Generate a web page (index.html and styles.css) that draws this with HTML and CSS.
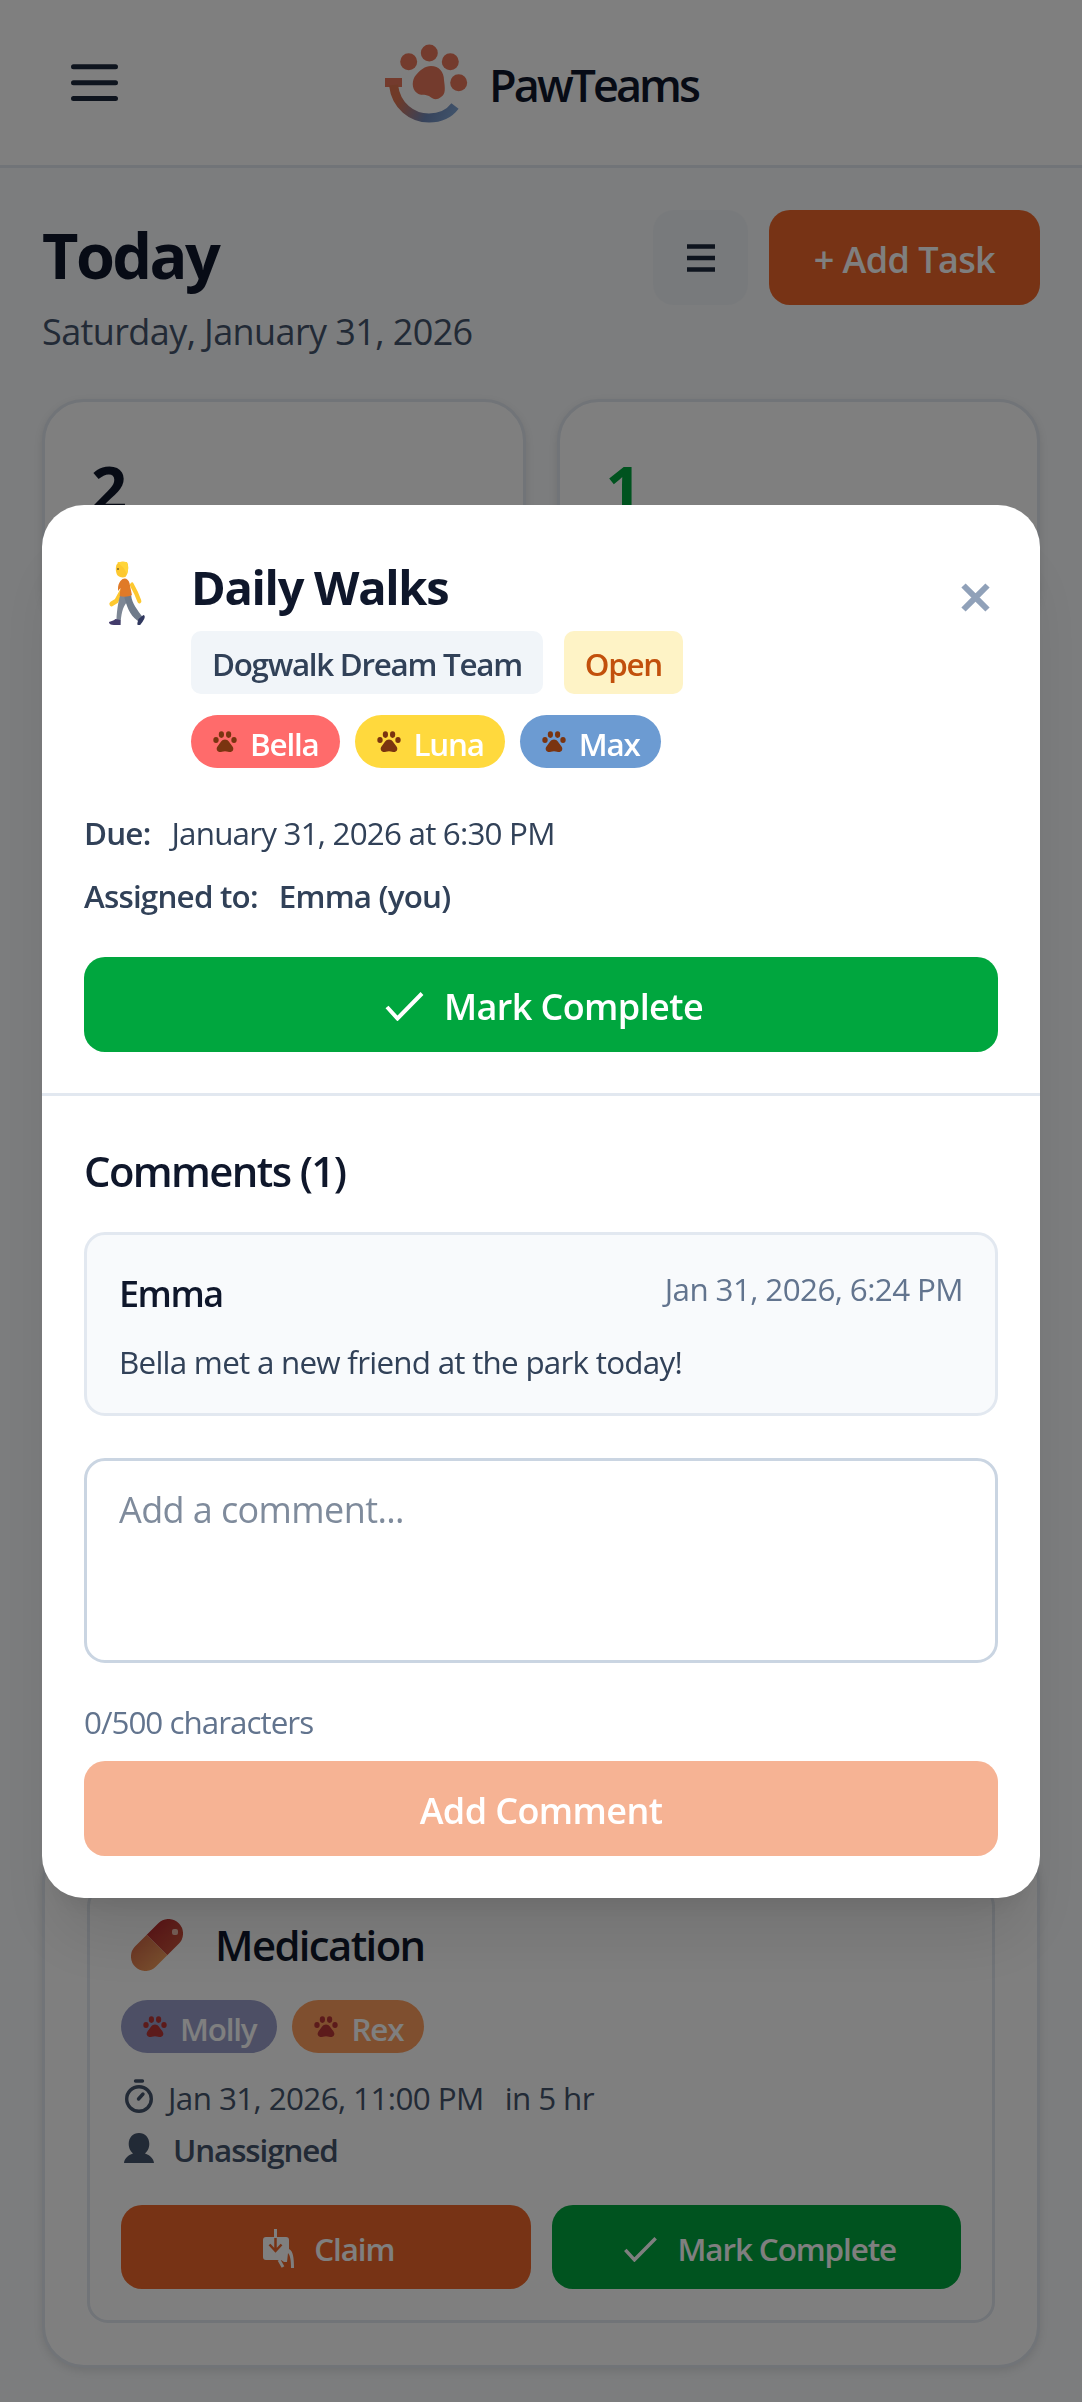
FILE: index.html
```html
<!DOCTYPE html>
<html lang="en">
<head>
    <meta charset="UTF-8">
    <meta name="viewport" content="width=device-width, initial-scale=1.0">
    <title>PawTeams</title>
    <link rel="stylesheet" href="styles.css">
</head>
<body>
    <!-- shared icons -->
    <svg class="sprite" width="0" height="0">
        <symbol id="paw" viewBox="0 0 24 22">
            <ellipse cx="8.4" cy="3.6" rx="2.6" ry="3.3"/>
            <ellipse cx="15.6" cy="3.6" rx="2.6" ry="3.3"/>
            <ellipse cx="3" cy="9" rx="2.7" ry="3"/>
            <ellipse cx="21" cy="9" rx="2.7" ry="3"/>
            <path d="M12 8.5c3.3 0 4.3 3 6.2 5.2 1.8 2 2.6 3.6 1.9 5.4-.9 2.2-3.4 2.3-5 1.7-2-.7-4.2-.7-6.2 0-1.6.6-4.1.5-5-1.7-.7-1.8.1-3.4 1.9-5.4C7.7 11.5 8.7 8.500 12 8.500z"/>
        </symbol>
        <symbol id="check" viewBox="0 0 39 30">
            <path d="M2 16l10.500 11.500L37 2.500" fill="none" stroke="currentColor" stroke-width="4"/>
        </symbol>
    </svg>

    <header class="navbar">
        <svg class="menu-icon" width="47" height="38" viewBox="0 0 47 38">
            <path d="M2.500 2.800h42M2.500 18.800h42M2.500 34.600h42" stroke="#1d293d" stroke-width="5" stroke-linecap="round"/>
        </svg>
        <div class="brand">
            <svg width="84" height="80" viewBox="0 0 84 80">
                <defs>
                    <linearGradient id="smile" x1="10" y1="40" x2="70" y2="70" gradientUnits="userSpaceOnUse">
                        <stop offset="0.15" stop-color="#e0744e"/>
                        <stop offset="0.65" stop-color="#6d87b8"/>
                        <stop offset="1" stop-color="#7fa3d3"/>
                    </linearGradient>
                </defs>
                <g fill="#e8775a">
                    <circle cx="24.7" cy="18.7" r="8.5"/>
                    <circle cx="45.3" cy="10" r="8.5"/>
                    <circle cx="66.3" cy="18.7" r="8.5"/>
                    <circle cx="74.7" cy="39.7" r="8.5"/>
                    <path d="M47 23c8 0 13 6 13 14 1 8 2 14-3 17-5 4-8 2-12-1-5-2-8 0-12-3-6-4-5-14-1-18 4-5 9-9 15-9z"/>
                    <path d="M1 35h17v9H1z"/>
                </g>
                <path d="M9.500 42C12 63 28 75 45 75c10 0 20-4 26-12" fill="none" stroke="url(#smile)" stroke-width="9"/>
            </svg>
            <span class="brand-name">PawTeams</span>
        </div>
    </header>

    <main class="page">
        <div class="page-top">
            <div>
                <h1>Today</h1>
                <p class="date">Saturday, January 31, 2026</p>
            </div>
            <div class="actions">
                <button class="btn-view">
                    <svg width="28" height="28" viewBox="0 0 28 28">
                        <path d="M0 2.500h28M0 14h28M0 25.500h28" stroke="#1d293d" stroke-width="4.500"/>
                    </svg>
                </button>
                <button class="btn btn-add">+ Add Task</button>
            </div>
        </div>

        <div class="stats">
            <div class="stat">2</div>
            <div class="stat stat-done">1</div>
        </div>

        <div class="tasks">
            <div class="task">
                <div class="task-title">
                    <svg width="52" height="52" viewBox="0 0 52 52">
                        <defs>
                            <linearGradient id="pillTop" x1="0" y1="0" x2="1" y2="0">
                                <stop offset="0" stop-color="#b93030"/>
                                <stop offset="1" stop-color="#c9503a"/>
                            </linearGradient>
                            <linearGradient id="pillBottom" x1="0" y1="0" x2="1" y2="0">
                                <stop offset="0" stop-color="#d9704a"/>
                                <stop offset="1" stop-color="#f09a5a"/>
                            </linearGradient>
                        </defs>
                        <g transform="rotate(45 26 26)">
                            <path d="M11.500 26V9.700a14.500 14.500 0 0 1 29 0V26z" fill="url(#pillTop)"/>
                            <path d="M11.500 26v16.300a14.500 14.500 0 0 0 29 0V26z" fill="url(#pillBottom)"/>
                        </g>
                        <rect x="41" y="10" width="6" height="6" rx="2" fill="#f0c0b0"/>
                    </svg>
                    <h3>Medication</h3>
                </div>
                <div class="pets pets-urgent">
                    <span class="pet molly"><svg><use href="#paw"/></svg>Molly</span>
                    <span class="pet rex"><svg><use href="#paw"/></svg>Rex</span>
                </div>
                <div class="meta">
                    <svg width="36" height="36" viewBox="0 0 36 36" fill="none" stroke="#45556c">
                        <circle cx="18" cy="20" r="12.300" stroke-width="3.400"/>
                        <path d="M14.500 2h7M17.500 20l4.500-5" stroke-width="3.400" stroke-linecap="round"/>
                    </svg>
                    <span class="meta-date">Jan 31, 2026, 11:00 PM</span>
                    <span class="meta-in">in 5 hr</span>
                </div>
                <div class="meta">
                    <svg width="36" height="36" viewBox="0 0 36 36" fill="#45556c">
                        <path d="M18 2c6 0 10.300 4.500 10.300 11 0 5-2.500 7.500-4.300 9.500 5 1.500 8.500 5 9 9.500H3c.5-4.500 4-8 9-9.500-1.800-2-4.300-4.500-4.300-9.500C7.700 6.500 12 2 18 2z"/>
                    </svg>
                    <span class="meta-user">Unassigned</span>
                </div>
                <div class="task-buttons">
                    <button class="btn btn-claim">
                        <svg width="31" height="40" viewBox="0 0 31 40">
                            <path d="M3 8h20a3 3 0 0 1 3 3v9c4 2 5 8 5 19h-3c0-8-1-13-3-15l-1 9h-3l-3-2H3a3 3 0 0 1-3-3V11a3 3 0 0 1 3-3z" fill="currentColor"/>
                            <path d="M16 31l4 7" stroke="currentColor" stroke-width="3"/>
                            <path d="M12.500 9v12M6.500 15.500l6 6.500 6-6.500" fill="none" stroke="#ee672a" stroke-width="2.500"/>
                            <path d="M12.500 0v9" stroke="currentColor" stroke-width="3"/>
                        </svg>
                        Claim
                    </button>
                    <button class="btn btn-complete">
                        <svg width="35" height="26"><use href="#check"/></svg>
                        Mark Complete
                    </button>
                </div>
            </div>
        </div>
    </main>

    <div class="overlay">
        <div class="modal">
            <div class="modal-top">
                <div class="modal-header">
                    <svg class="walker" width="86" height="66" viewBox="0 0 86 66">
                        <g transform="translate(9.400 0) scale(.82 1)">
                            <path d="M34 31l-6 9-6 3" fill="none" stroke="#fdc82f" stroke-width="5" stroke-linecap="round" stroke-linejoin="round"/>
                            <path d="M34 31h10l-3 10c-6 6-7 12-8 23h-5c0-12 2-24 6-33z" fill="#7d8795"/>
                            <path d="M38 35l8-1c1 9 8 15 14 22l-4 5c-9-5-14-11-18-24z" fill="#6f7b8a"/>
                            <path d="M27 58l6 1v5H25c-4 0-6-1-6-3 2-1 5-1 8-3z" fill="#433b6b"/>
                            <path d="M55 58l6-4c4 1 0 6-4 10h-3c-1-1 0-3 1-6z" fill="#30385f"/>
                            <path d="M33 20c4-4 9-3 11 2l3 12c-4 2-11 2-15 1l1-8-3 3c0-5 0-6 3-10z" fill="#e07a28"/>
                            <path d="M47 24l5 8 4 8" fill="none" stroke="#fdc82f" stroke-width="5" stroke-linecap="round"/>
                            <path d="M28 4c2-4 12-5 14-1 1 5 0 10-3 13-4 1-8 0-10-2-2-3-2-7-1-10z" fill="#fdc82f"/>
                            <path d="M29 1l12 0c2 4 2 8 0 12l-4-6z" fill="#ffd53a"/>
                            <circle cx="30" cy="8" r="1" fill="#5c4a2a"/>
                        </g>
                    </svg>
                    <div class="modal-info">
                        <h2>Daily Walks</h2>
                        <div class="tags">
                            <span class="tag tag-team">Dogwalk Dream Team</span>
                            <span class="tag tag-open">Open</span>
                        </div>
                        <div class="pets">
                            <span class="pet bella"><svg><use href="#paw"/></svg>Bella</span>
                            <span class="pet luna"><svg><use href="#paw"/></svg>Luna</span>
                            <span class="pet max"><svg><use href="#paw"/></svg>Max</span>
                        </div>
                    </div>
                    <button class="btn-close">
                        <svg width="29" height="29" viewBox="0 0 29 29">
                            <path d="M2.500 2.500l24 24M26.500 2.500l-24 24" stroke="#90a1b9" stroke-width="6"/>
                        </svg>
                    </button>
                </div>
                <div class="details">
                    <div class="detail"><strong>Due:</strong><span>January 31, 2026 at 6:30 PM</span></div>
                    <div class="detail"><strong>Assigned to:</strong><strong>Emma (you)</strong></div>
                </div>
                <button class="btn btn-complete btn-wide">
                    <svg width="39" height="30"><use href="#check"/></svg>
                    Mark Complete
                </button>
            </div>
            <div class="comments">
                <h3>Comments (1)</h3>
                <div class="comment">
                    <div class="comment-head">
                        <span class="comment-author">Emma</span>
                        <span class="comment-date">Jan 31, 2026, 6:24 PM</span>
                    </div>
                    <p class="comment-text">Bella met a new friend at the park today!</p>
                </div>
                <textarea placeholder="Add a comment..."></textarea>
                <p class="count">0/500 characters</p>
                <button class="btn btn-comment btn-wide">Add Comment</button>
            </div>
        </div>
    </div>
</body>
</html>
```

FILE: styles.css
```css
* {
    box-sizing: border-box;
    margin: 0;
    padding: 0;
}
body {
    font-family: "Open Sans", "Noto Sans", sans-serif;
    font-size: 31.4px;
    letter-spacing: -0.6px;
    color: #0f172b;
    background-color: #f8fafc;
    height: 2402px;
    display: flex;
    flex-direction: column;
    overflow: hidden;
}
svg {
    display: block;
    flex-shrink: 0;
}
.sprite {
    position: absolute;
}
h1, h2 {
    font-weight: 700;
}
h3 {
    font-size: 41.8px;
    font-weight: 600;
    letter-spacing: -1.6px;
}
button {
    font-family: inherit;
    letter-spacing: inherit;
    border: none;
}
.navbar {
    display: grid;
    grid-template-columns: 1fr auto 1fr;
    align-items: center;
    height: 168px;
    background-color: #fff;
    border-bottom: 3px solid #e2e8f0;
}
.menu-icon {
    margin-left: 71px;
}
.brand {
    display: flex;
    align-items: center;
    gap: 21px;
}
.brand-name {
    font-size: 45px;
    font-weight: 600;
    line-height: 60px;
    letter-spacing: -3px;
    padding-top: 4px;
}
.page {
    flex: 1;
    display: flex;
    flex-direction: column;
    padding: 42px 42px 34px;
}
.page-top {
    display: flex;
    justify-content: space-between;
}
h1 {
    font-size: 63px;
    line-height: 90px;
    letter-spacing: -2.6px;
}
.date {
    font-size: 36px;
    line-height: 54px;
    color: #45556c;
    margin-top: 5px;
}
.actions {
    display: flex;
    gap: 21px;
}
.btn, .btn-view {
    display: flex;
    align-items: center;
    justify-content: center;
    height: 95px;
    border-radius: 21px;
}
.btn {
    gap: 20px;
    padding-top: 3px;
    color: #fff;
    font-size: 36px;
    font-weight: 600;
}
.btn-view {
    width: 95px;
    background-color: #f1f5f9;
}
.btn-add {
    width: 271px;
    background-color: #ee672a;
}
.stats {
    display: grid;
    grid-template-columns: 1fr 1fr;
    gap: 31px;
    margin-top: 40px;
}
.stat {
    height: 230px;
    padding: 44px 46px;
    background-color: #fff;
    border: 3px solid #e2e8f0;
    border-radius: 42px;
    box-shadow: 0 3px 8px rgba(0,0,0,0.1);
    font-size: 63px;
    font-weight: 700;
    line-height: 84px;
}
.stat-done {
    color: #00a63e;
}
.tasks {
    margin-top: auto;
    padding: 42px;
    background-color: #fff;
    border: 3px solid #e2e8f0;
    border-radius: 42px;
    box-shadow: 0 3px 8px rgba(0,0,0,0.1);
}
.task {
    padding: 31px;
    border: 3px solid #e2e8f0;
    border-radius: 21px;
}
.task-title {
    display: flex;
    align-items: center;
    gap: 32px;
    padding-left: 10px;
    line-height: 52px;
}
.pets {
    display: flex;
    gap: 15px;
}
.pet {
    display: flex;
    align-items: center;
    gap: 13px;
    height: 53px;
    padding: 4px 21px 0 22px;
    border-radius: 27px;
    color: #fff;
    font-weight: 600;
    letter-spacing: -1.2px;
}
.pet svg {
    width: 24px;
    height: 22px;
    margin-top: -4px;
    fill: #7a3410;
}
.pets-urgent {
    margin: 29px 0 18px;
}
.pets-urgent svg {
    fill: #b93636;
}
.bella {
    background-color: #ff6b6b;
}
.luna {
    background-color: #ffd93d;
}
.max {
    background-color: #6c9bd2;
}
.molly {
    background-color: #9a9fcb;
}
.rex {
    background-color: #fe9f5f;
}
.meta {
    display: flex;
    align-items: center;
    height: 52px;
    color: #45556c;
}
.meta-date {
    margin-left: 11px;
}
.meta-in {
    margin-left: 21px;
}
.meta-user {
    margin-left: 16px;
    font-weight: 600;
    letter-spacing: -1.1px;
}
.task-buttons {
    display: grid;
    grid-template-columns: 1fr 1fr;
    gap: 21px;
    margin-top: 30px;
}
.task-buttons .btn {
    height: 84px;
    padding-left: 6px;
    font-size: 31.4px;
    letter-spacing: -1.1px;
}
.btn-claim {
    background-color: #ee672a;
}
.btn-complete {
    padding-left: 6px;
    background-color: #00a63e;
}
.overlay {
    position: fixed;
    inset: 0;
    padding: 505px 42px 0;
    background-color: rgba(0,0,0,0.5);
}
.modal {
    background-color: #fff;
    border-radius: 42px;
    box-shadow: 0 52px 65px -13px rgba(0,0,0,0.1), 0 21px 26px -16px rgba(0,0,0,0.1);
}
.modal-top {
    padding: 42px 42px 41px;
    border-bottom: 3px solid #e2e8f0;
}
.modal-header {
    display: flex;
}
.walker {
    margin: 14px 21px 0 0;
}
.modal-info {
    flex: 1;
}
h2 {
    font-size: 47px;
    line-height: 80px;
    letter-spacing: -1.3px;
}
.tags {
    display: flex;
    gap: 21px;
    margin: 4px 0 21px;
}
.tag {
    height: 63px;
    padding: 0 21px;
    border-radius: 10px;
    font-weight: 600;
    line-height: 65px;
    letter-spacing: -1.3px;
}
.tag-team {
    background-color: #f1f5f9;
    color: #314158;
}
.tag-open {
    background-color: #fef3c6;
    color: #c2500c;
}
.btn-close {
    align-self: flex-start;
    margin: 36px 8px 0 0;
    background: none;
}
.details {
    display: flex;
    flex-direction: column;
    gap: 16px;
    margin: 41px 0 38px;
    line-height: 47px;
    letter-spacing: -0.8px;
    color: #314158;
}
.detail {
    display: flex;
    gap: 21px;
}
.detail strong {
    font-weight: 600;
}
.btn-wide {
    width: 100%;
}
.comments {
    padding: 44px 42px 42px;
}
.comments h3 {
    line-height: 62px;
    margin-bottom: 30px;
}
.comment {
    padding: 32px 32px 29px;
    background-color: #f8fafc;
    border: 3px solid #e2e8f0;
    border-radius: 21px;
}
.comment-head {
    display: flex;
    justify-content: space-between;
    align-items: flex-start;
    margin-bottom: 19px;
}
.comment-author {
    font-size: 36px;
    font-weight: 600;
    line-height: 54px;
    letter-spacing: -1.5px;
}
.comment-date {
    line-height: 44px;
    color: #62748e;
}
.comment-text {
    line-height: 44px;
    letter-spacing: -0.75px;
    color: #314158;
}
textarea {
    display: block;
    width: 100%;
    height: 205px;
    margin: 42px 0 36px;
    padding: 22px 32px;
    border: 3px solid #cad5e2;
    border-radius: 21px;
    font-family: inherit;
    font-size: 36px;
    line-height: 54px;
    letter-spacing: inherit;
    resize: none;
}
textarea::placeholder {
    color: #7f8b9c;
}
.count {
    line-height: 45px;
    margin-bottom: 17px;
    letter-spacing: -1px;
    color: #62748e;
}
.btn-comment {
    background-color: #f6b394;
}
```
